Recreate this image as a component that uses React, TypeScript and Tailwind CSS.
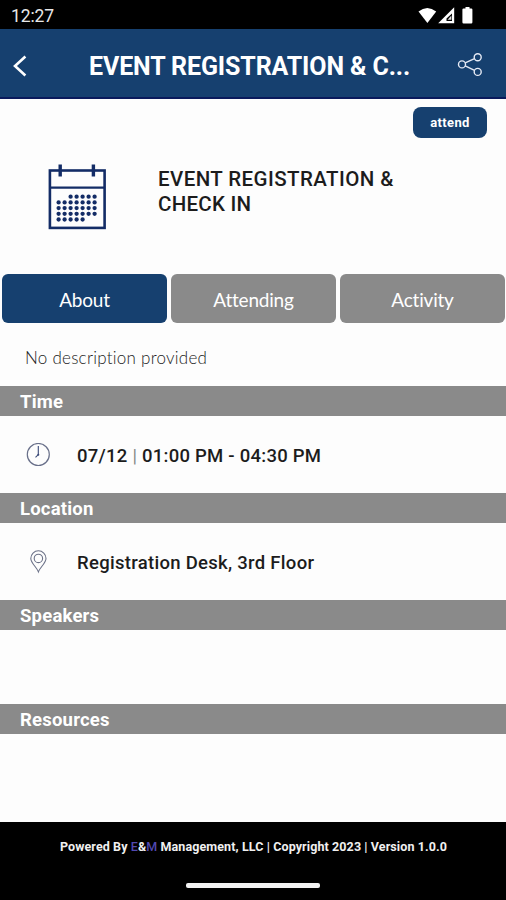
const DOT_ROWS: number[][] = [
  [2, 3, 4, 5, 6],
  [0, 1, 2, 3, 4, 5, 6],
  [0, 1, 2, 3, 4, 5, 6],
  [0, 1, 2, 3, 4, 5, 6],
  [0, 1, 2, 3, 4],
];

function StatusBar() {
  return (
    <div className="flex h-[29px] shrink-0 items-center justify-between bg-black pl-[11px] pr-[32px] pt-[3px] text-white">
      <span className="text-[17.5px] leading-5 tracking-[-0.1px] text-[#e8e8e8]">12:27</span>
      <svg width="56" height="18" viewBox="0 0 56 18" className="-mt-[3px]">
        <path d="M0.5 5.6 Q9.3 -1.6 18.2 5.6 L9.4 17Z" fill="#fff" />
        <path d="M36.2 1.2V17.2H20.2Z" fill="#fff" />
        <path d="M34 7.5V15H28.5V12.5Z" fill="#000" />
        <path d="M33.4 9.6V13.7H29.6Z" fill="#ddd" />
        <path d="M45.6 2.4H47.5V1H51.5V2.4H53.2Q54.4 2.4 54.4 3.6V16.2Q54.4 17.4 53.2 17.4H45.6Q44.4 17.4 44.4 16.2V3.6Q44.4 2.4 45.6 2.4Z" fill="#fff" />
      </svg>
    </div>
  );
}

function Header() {
  return (
    <header className="flex h-[70px] shrink-0 items-center border-b-2 border-[#0a1a5c] bg-[#16406f] pl-[12px] pr-[23px] text-white">
      <svg width="16" height="24" viewBox="0 0 16 24" fill="none" stroke="#fff" strokeWidth="2.6" className="mt-[5px]">
        <path d="M13.4 2.5 3 12 13.4 21.5" />
      </svg>
      <h1 className="ml-[61px] mt-[7px] flex-1 whitespace-nowrap text-[25px] font-bold leading-8 tracking-[-0.12px]">
        EVENT REGISTRATION &amp; C...
      </h1>
      <svg width="26" height="25" viewBox="0 0 26 25" fill="none" stroke="#e6eaf5" strokeWidth="1.4" className="mt-[2px]">
        <circle cx="5" cy="12.4" r="3.5" />
        <circle cx="20.7" cy="5.2" r="3.5" />
        <circle cx="20.7" cy="19.9" r="3.5" />
        <path d="M8.2 10.9 17.5 6.7M8.2 13.9 17.5 18.3" />
      </svg>
    </header>
  );
}

function CalendarIcon() {
  return (
    <svg width="58" height="66" viewBox="48 164 58 66" fill="none" stroke="#132c66">
      <rect x="49.9" y="170.5" width="54.7" height="57.4" strokeWidth="2.6" />
      <path d="M49 187.7H105" strokeWidth="2.2" />
      <path d="M60.2 164.5V176.5M93.4 164.5V176.5" strokeWidth="3.4" />
      <g fill="#132c66" stroke="none">
        {DOT_ROWS.map((row, r) =>
          row.map((c) => (
            <circle key={`${r}-${c}`} cx={58.6 + c * 6} cy={196.7 + r * 5.7} r="2.15" />
          )),
        )}
      </g>
    </svg>
  );
}

function Tab({ label, active = false }: { label: string; active?: boolean }) {
  return (
    <button
      className={`flex h-[49px] flex-1 items-center justify-center rounded-[6px] pt-[4px] font-[Lato,sans-serif] text-[19px] tracking-[-0.2px] text-white [font-variant-ligatures:none] ${
        active ? "bg-[#16406f]" : "bg-[#8a8a8a]"
      }`}
    >
      {label}
    </button>
  );
}

function SectionTitle({ children }: { children: string }) {
  return (
    <h2 className="flex h-[30px] shrink-0 items-center bg-[#8a8a8a] pl-[20px] pt-[4px] text-[18.5px] font-bold tracking-[0.2px] text-white">
      {children}
    </h2>
  );
}

function ClockIcon() {
  return (
    <svg width="24" height="24" viewBox="0 0 24 24" fill="none" stroke="#69708a">
      <circle cx="12.3" cy="11.5" r="11" strokeWidth="1.2" />
      <path d="M12.3 3V11.6L9.5 14.4" stroke="#3b4a78" strokeWidth="1.1" />
      <circle cx="12.3" cy="11.7" r="1" fill="#3b4a78" stroke="none" />
    </svg>
  );
}

function PinIcon() {
  return (
    <svg width="24" height="24" viewBox="0 0 24 24" fill="none" stroke="#6c7288" strokeWidth="1.1">
      <path d="M12.4 21.8C11 17.5 4.8 13 4.8 8.4A7.6 7.6 0 0 1 20 8.4C20 13 13.8 17.5 12.4 21.8Z" />
      <circle cx="12.4" cy="8.4" r="4.2" />
    </svg>
  );
}

export default function App() {
  return (
    <div className="flex h-[900px] w-[506px] flex-col overflow-hidden bg-[#fdfdfd] font-[Roboto,sans-serif]">
      <StatusBar />
      <Header />
      <div className="flex h-[39px] shrink-0 justify-end pr-[19px] pt-[8px]">
        <button className="h-[31px] w-[74px] rounded-[8px] bg-[#16406f] pt-px text-[13px] font-bold tracking-[0.35px] text-white">
          attend
        </button>
      </div>
      <div className="flex h-[136px] shrink-0 pl-[48px] pt-[26px]">
        <CalendarIcon />
        <p className="ml-[52px] mt-[3px] w-[270px] text-[20.5px] font-medium leading-[25px] tracking-[0.42px] text-[#1c1c1c]">
          EVENT REGISTRATION &amp; <span className="tracking-[0.25px]">CHECK IN</span>
        </p>
      </div>
      <nav className="flex shrink-0 gap-[4px] pl-[2px] pr-[1px]">
        <Tab label="About" active />
        <Tab label="Attending" />
        <Tab label="Activity" />
      </nav>
      <p className="flex h-[63px] shrink-0 items-center pl-[25px] pt-[6px] font-[Lato,sans-serif] text-[17px] font-light tracking-[0.25px] text-[#1c1c1c] [font-variant-ligatures:none]">
        No description provided
      </p>
      <SectionTitle>Time</SectionTitle>
      <div className="flex h-[77px] shrink-0 items-center pl-[26px] text-[18.5px] font-medium tracking-[0.25px] text-[#1c1c1c]">
        <ClockIcon />
        <span className="ml-[27px] whitespace-pre pt-[4px]">
          07/12 <span className="font-normal text-[#888]">|</span> 01:00 PM - 04:30 PM
        </span>
      </div>
      <SectionTitle>Location</SectionTitle>
      <div className="flex h-[77px] shrink-0 items-center pl-[26px] text-[18.5px] font-medium tracking-[0.29px] text-[#1c1c1c]">
        <PinIcon />
        <span className="ml-[27px] pt-[4px]">Registration Desk, 3rd Floor</span>
      </div>
      <SectionTitle>Speakers</SectionTitle>
      <div className="h-[74px] shrink-0" />
      <SectionTitle>Resources</SectionTitle>
      <div className="h-[88px] shrink-0" />
      <footer className="flex flex-1 flex-col items-center bg-black pt-[17px] text-white">
        <p className="whitespace-nowrap pl-px text-[12.5px] font-bold leading-4 tracking-[0.1px] text-[#f0f0f0]">
          Powered By <span className="font-medium text-[#5148b0]">E</span>&amp;
          <span className="font-medium text-[#5148b0]">M</span> Management, LLC | Copyright 2023 | Version 1.0.0
        </p>
        <div className="mt-[28px] h-[5px] w-[134px] rounded-[2px] bg-[#f2f2f2]" />
      </footer>
    </div>
  );
}
